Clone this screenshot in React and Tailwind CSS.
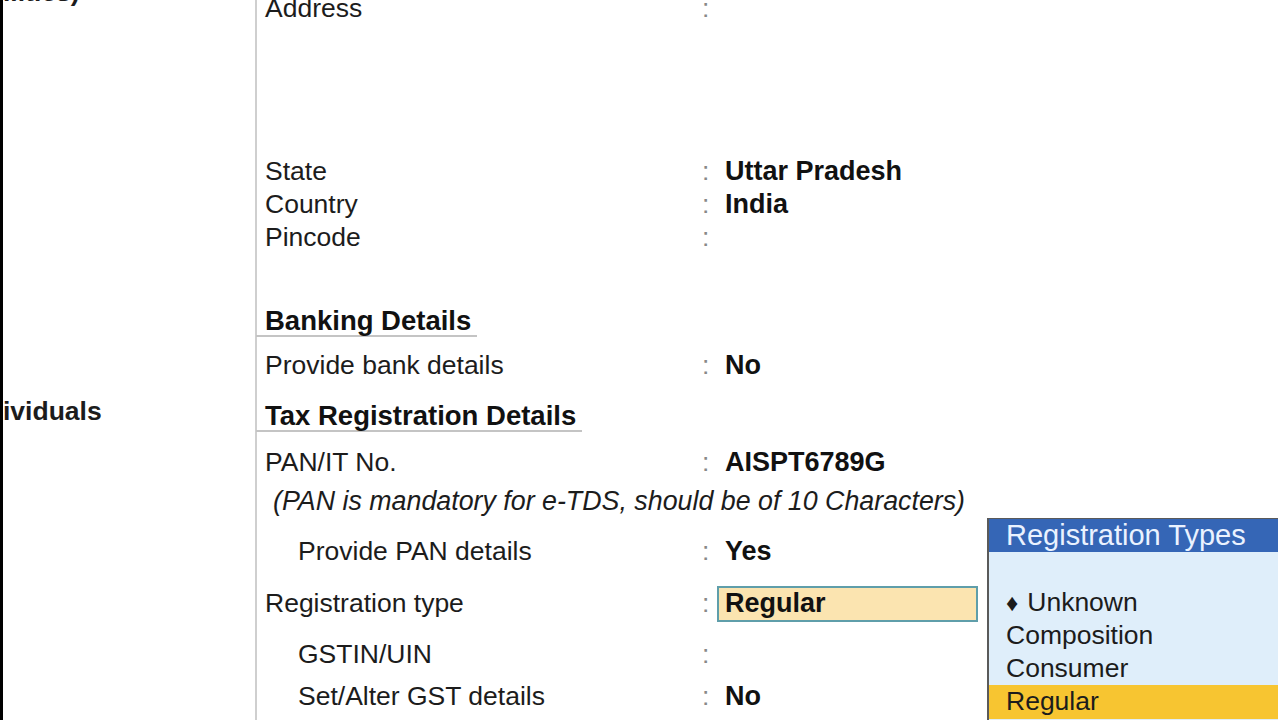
import React from 'react';

const font = { fontFamily: '"Liberation Sans", Arial, sans-serif' };

function Row({ label, value, indent, className = '' }) {
  return (
    <div className={`flex h-[33px] items-center leading-[33px] ${className}`}>
      <div className={`w-[437px] shrink-0 ${indent ? 'pl-[33px]' : ''}`}>{label}</div>
      <div className="w-[23px] shrink-0 text-[#888]">:</div>
      {value && <div className="text-[27px] font-bold text-[#111]">{value}</div>}
    </div>
  );
}

function Heading({ children, className = '' }) {
  return (
    <div className={`flex ${className}`}>
      <div className="-ml-[9px] h-[33px] border-b-2 border-[#c4c4c4] pl-[9px] pr-[6px] text-[27.5px] font-bold leading-[33px] text-[#111]">
        {children}
      </div>
    </div>
  );
}

export default function App() {
  return (
    <div className="relative flex h-[720px] w-[1280px] overflow-hidden bg-white text-[26.5px] text-[#1c1c1c]" style={font}>
      {/* left pane */}
      <div className="w-[255px] shrink-0 border-l-[3px] border-black">
        <div className="-mt-[24px] h-[33px] font-bold leading-[33px]">ilities)</div>
        <div className="mt-[386px] font-bold leading-[33px]">ividuals</div>
      </div>

      <div className="w-[2px] shrink-0 bg-[#cfcfcf]" />

      {/* form */}
      <div className="flex-1 pl-[8px]">
        <div className="-mt-[8px]">
          <Row label="Address" />
          <Row label="State" value="Uttar Pradesh" className="mt-[130px]" />
          <Row label="Country" value="India" />
          <Row label="Pincode" />
          <Heading className="mt-[50px]">Banking Details</Heading>
          <Row label="Provide bank details" value="No" className="mt-[12px]" />
          <Heading className="mt-[17px]">Tax Registration Details</Heading>
          <Row label="PAN/IT No." value="AISPT6789G" className="mt-[14px]" />
          <div className="mt-[6px] h-[33px] pl-[8px] text-[26.8px] italic leading-[33px]">
            (PAN is mandatory for e-TDS, should be of 10 Characters)
          </div>
          <Row label="Provide PAN details" value="Yes" indent className="mt-[17px]" />
          <div className="mt-[19px] flex h-[33px] items-center">
            <div className="w-[437px] shrink-0">Registration type</div>
            <div className="w-[15px] shrink-0 text-[#888]">:</div>
            <div className="flex h-[36px] w-[261px] items-center border-2 border-[#5f9eaa] bg-[#fbe4b0] pl-[6px] text-[27px] font-bold text-[#111]">
              Regular
            </div>
          </div>
          <Row label="GSTIN/UIN" indent className="mt-[18px]" />
          <Row label="Set/Alter GST details" value="No" indent className="mt-[9px]" />
        </div>
      </div>

      {/* popup list */}
      <div className="absolute left-[987px] top-[518px] h-[210px] w-[291px] border-l-2 border-t border-[#5a5a5a] bg-[#dfeefa]">
        <div className="flex h-[33px] items-center bg-[#3566b6] pl-[17px] text-[29px] text-[#eaf2ff]">
          Registration Types
        </div>
        <div className="mt-[34px] flex h-[33px] items-center pl-[17px] leading-[33px]">
          <span className="mr-[9px] text-[24px] leading-none">♦</span>Unknown
        </div>
        <div className="flex h-[33px] items-center pl-[17px]">Composition</div>
        <div className="flex h-[33px] items-center pl-[17px]">Consumer</div>
        <div className="flex h-[34px] items-center bg-[#f7c531] pl-[17px]">Regular</div>
      </div>
    </div>
  );
}
